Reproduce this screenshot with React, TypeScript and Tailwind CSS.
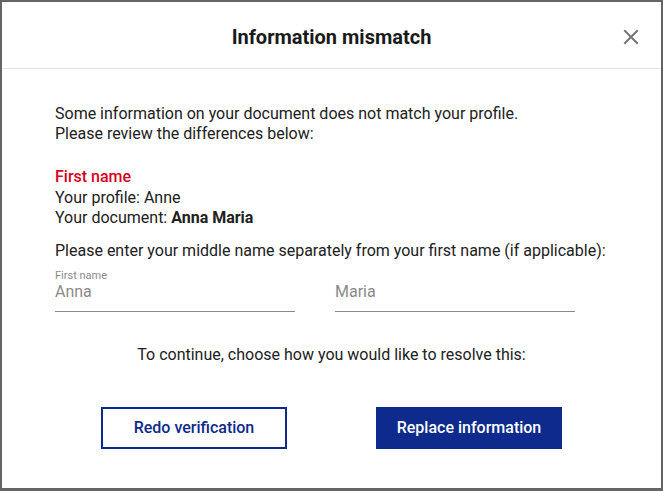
export default function App() {
  return (
    <div className="h-[491px] w-[663px] overflow-hidden bg-[#656565] p-[2px] font-['Roboto',sans-serif] text-[#212121]">
      <div className="flex h-[486px] w-[659px] flex-col bg-white">
        <div className="relative flex h-[67px] items-center justify-center border-b border-[#e6e6e6] pt-[3px]">
          <h2 className="text-[20px] font-bold text-[#1a1a1a]">
            Information mismatch
          </h2>
          <button
            type="button"
            aria-label="Close"
            className="absolute right-[22px] top-[27px] text-[#757575]"
          >
            <svg width="16" height="16" viewBox="0 0 16 16">
              <path
                d="M2 2 L14 14 M14 2 L2 14"
                stroke="currentColor"
                strokeWidth="2"
                strokeLinecap="square"
              />
            </svg>
          </button>
        </div>

        <div className="px-[53px] pt-[35px] text-[16px] leading-[20px]">
          <p>
            Some information on your document does not match your profile.
            <br />
            Please review the differences below:
          </p>

          <div className="mt-[23px] leading-[20.5px]">
            <p className="font-medium text-[#d7001c]">First name</p>
            <p>Your profile: Anne</p>
            <p>
              Your document: <span className="font-bold">Anna Maria</span>
            </p>
          </div>

          <p className="mt-[12px]">
            Please enter your middle name separately from your first name (if
            applicable):
          </p>

          <div className="mt-[8px] flex gap-[40px]">
            <div className="w-[240px] border-b border-[#8a8a8a] pb-[9px]">
              <p className="text-[11px] leading-[13px] text-[#8a8a8a]">
                First name
              </p>
              <p className="text-[#8a8a8a]">Anna</p>
            </div>
            <div className="w-[240px] border-b border-[#8a8a8a] pb-[9px]">
              <p className="text-[11px] leading-[13px] text-transparent">
                Middle name
              </p>
              <p className="text-[#8a8a8a]">Maria</p>
            </div>
          </div>
        </div>

        <p className="mt-[33px] text-center text-[16px] leading-[20px]">
          To continue, choose how you would like to resolve this:
        </p>

        <div className="mt-[42px] flex justify-center gap-[89px]">
          <button
            type="button"
            className="h-[42px] w-[186px] border-2 border-[#0d2a8c] bg-white text-[16px] font-medium text-[#0d2a8c]"
          >
            Redo verification
          </button>
          <button
            type="button"
            className="h-[42px] w-[186px] bg-[#0d2a8c] text-[16px] font-medium text-white"
          >
            Replace information
          </button>
        </div>
      </div>
    </div>
  );
}
